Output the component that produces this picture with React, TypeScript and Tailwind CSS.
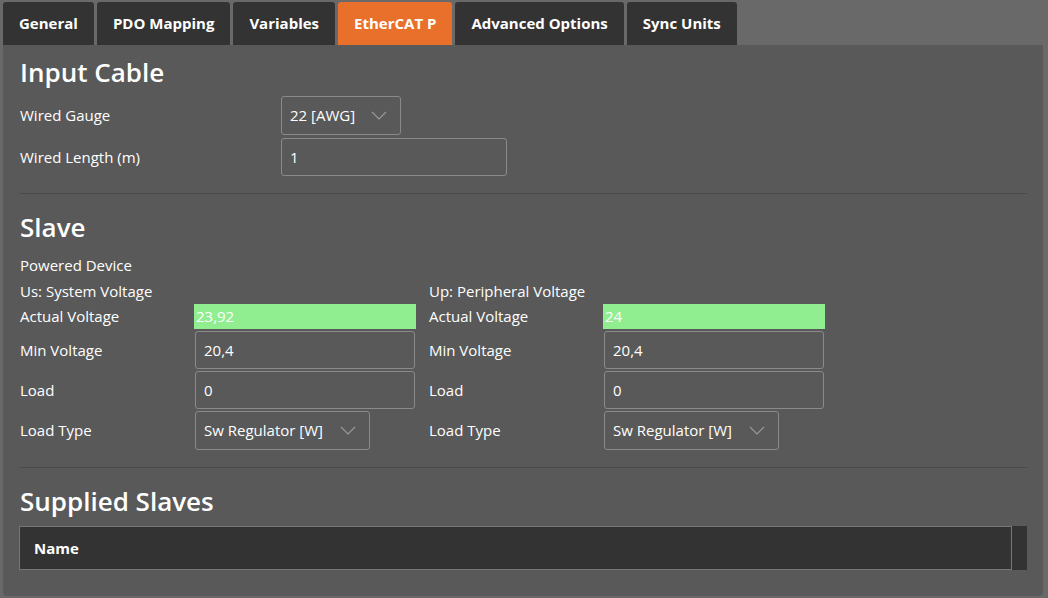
const tabs = ['General', 'PDO Mapping', 'Variables', 'EtherCAT P', 'Advanced Options', 'Sync Units']

function Chevron() {
  return (
    <svg width="16" height="9" viewBox="0 0 16 9" fill="none" stroke="#9a9a9a" strokeWidth="1.1">
      <polyline points="1,1 8,8 15,1" />
    </svg>
  )
}

function Select({ value, w }: { value: string; w: string }) {
  return (
    <div className={`flex h-[39px] items-center justify-between rounded-[3px] border border-[#8a8a8a] pl-2 pr-[13px] ${w}`}>
      <span>{value}</span>
      <Chevron />
    </div>
  )
}

function Input({ value, w }: { value: string; w: string }) {
  return <div className={`flex h-[38px] items-center rounded-[3px] border border-[#8a8a8a] px-2 ${w}`}>{value}</div>
}

function VoltageCol({ title, actual }: { title: string; actual: string }) {
  return (
    <div className="flex flex-col">
      <div className="flex h-[26px] items-center">{title}</div>
      <div className="grid grid-cols-[174px_1fr] items-center gap-y-[2px]">
        <span>Actual Voltage</span>
        <div className="flex h-[25px] w-[222px] items-center bg-[#90ee90] px-[2px]">{actual}</div>
        <span>Min Voltage</span>
        <Input value="20,4" w="ml-[1px] w-[220px]" />
        <span>Load</span>
        <Input value="0" w="ml-[1px] w-[220px]" />
        <span>Load Type</span>
        <Select value="Sw Regulator [W]" w="ml-[1px] w-[175px]" />
      </div>
    </div>
  )
}

export default function App() {
  return (
    <div className="h-[598px] w-[1048px] bg-[#696969] pt-[2px] font-['Segoe_UI','Open_Sans',sans-serif] text-[15px] text-white">
      <div className="flex gap-[3px] pl-[3px]">
        {tabs.map((t) => (
          <div
            key={t}
            className={`flex h-[43px] items-center rounded-t-[3px] px-4 font-bold ${t === 'EtherCAT P' ? 'bg-[#e8702a]' : 'bg-[#333333]'}`}
          >
            {t}
          </div>
        ))}
      </div>
      <div className="ml-[3px] h-[551px] w-[1040px] rounded-b-[4px] bg-[#595959] px-4">
        <h2 className="pl-[1px] pt-[10px] text-[26px] font-semibold leading-[34px]">Input Cable</h2>
        <div className="mt-[7px] grid grid-cols-[261px_1fr] items-center gap-y-[3px] pl-[1px]">
          <span>Wired Gauge</span>
          <Select value="22 [AWG]" w="w-[120px]" />
          <span>Wired Length (m)</span>
          <Input value="1" w="w-[226px]" />
        </div>
        <div className="mt-[17px] border-t border-[#4b4b4b]" />
        <h2 className="pl-[1px] pt-[16px] text-[26px] font-semibold leading-[34px]">Slave</h2>
        <div className="mt-[8px] flex h-[26px] items-center pl-[1px]">Powered Device</div>
        <div className="flex pl-[1px]">
          <div className="w-[409px]">
            <VoltageCol title="Us: System Voltage" actual="23,92" />
          </div>
          <VoltageCol title="Up: Peripheral Voltage" actual="24" />
        </div>
        <div className="mt-[17px] border-t border-[#4b4b4b]" />
        <h2 className="pl-[1px] pt-[16px] text-[26px] font-semibold leading-[34px]">Supplied Slaves</h2>
        <div className="mt-[8px] flex">
          <div className="flex h-[44px] flex-1 items-center border border-[#777] bg-[#333333] px-[14px] font-bold">Name</div>
          <div className="h-[44px] w-[15px] bg-[#333333]" />
        </div>
      </div>
    </div>
  )
}
